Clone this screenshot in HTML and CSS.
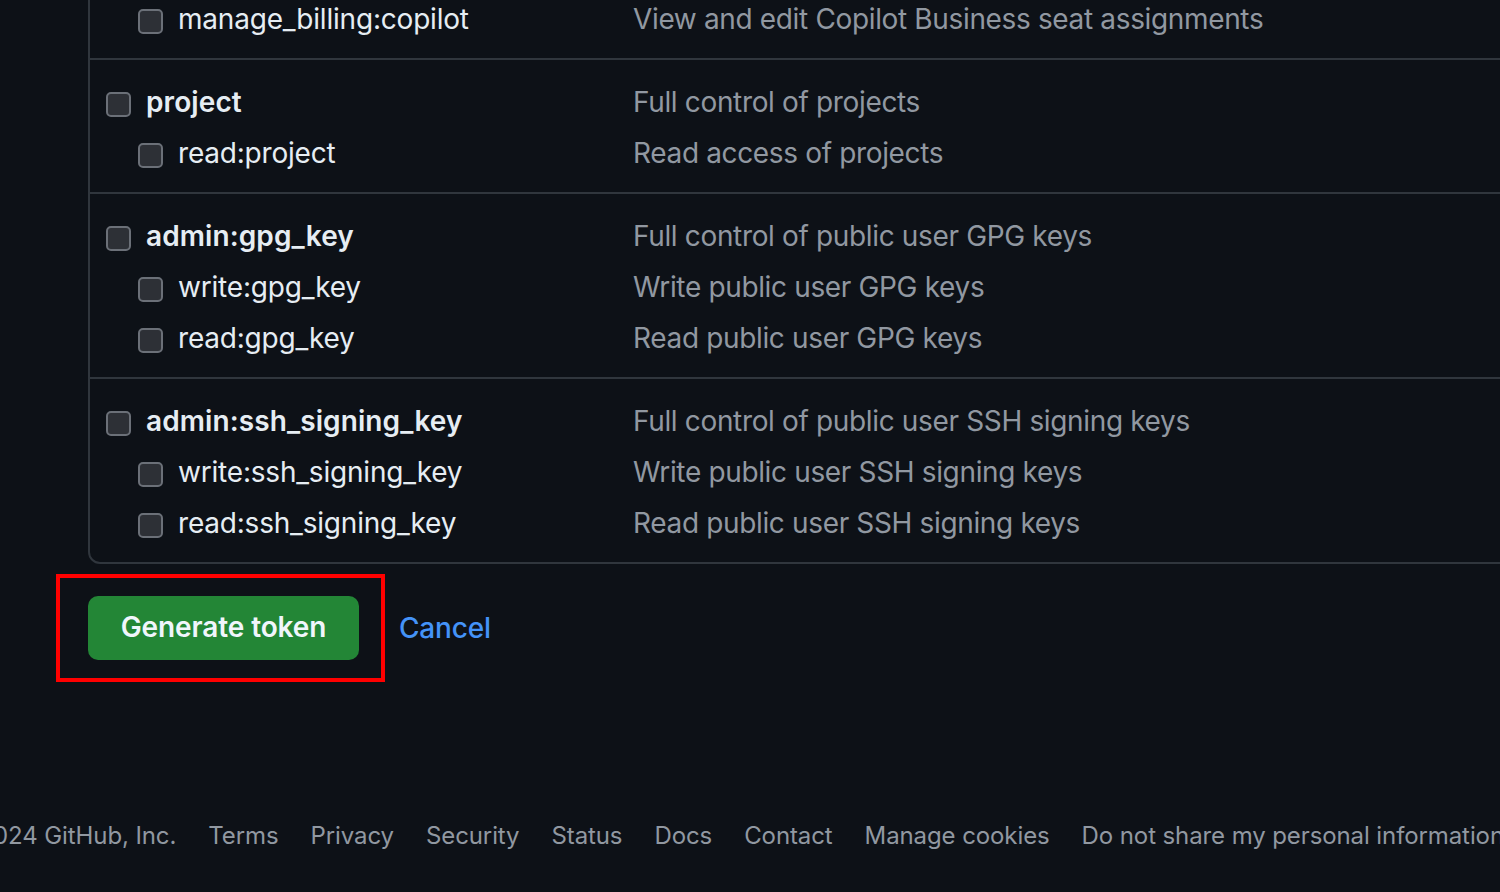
FILE: index.html
```html
<!DOCTYPE html>
<html lang="en">
<head>
<meta charset="utf-8">
<title>New personal access token</title>
<link rel="stylesheet" href="styles.css">
</head>
<body>
<main class="page">
  <div class="scopes">
    <div class="group">
      <div class="row">
        <label class="label parent"><span class="cb"></span><span class="name">copilot</span></label>
        <span class="desc">Full control of GitHub Copilot settings and seat assignments</span>
      </div>
      <div class="row sub">
        <label class="label"><span class="cb"></span><span class="name">manage_billing:copilot</span></label>
        <span class="desc">View and edit Copilot Business seat assignments</span>
      </div>
    </div>
    <div class="group">
      <div class="row">
        <label class="label parent"><span class="cb"></span><span class="name">project</span></label>
        <span class="desc">Full control of projects</span>
      </div>
      <div class="row sub">
        <label class="label"><span class="cb"></span><span class="name">read:project</span></label>
        <span class="desc">Read access of projects</span>
      </div>
    </div>
    <div class="group">
      <div class="row">
        <label class="label parent"><span class="cb"></span><span class="name">admin:gpg_key</span></label>
        <span class="desc">Full control of public user GPG keys</span>
      </div>
      <div class="row sub">
        <label class="label"><span class="cb"></span><span class="name">write:gpg_key</span></label>
        <span class="desc">Write public user GPG keys</span>
      </div>
      <div class="row sub">
        <label class="label"><span class="cb"></span><span class="name">read:gpg_key</span></label>
        <span class="desc">Read public user GPG keys</span>
      </div>
    </div>
    <div class="group">
      <div class="row">
        <label class="label parent"><span class="cb"></span><span class="name">admin:ssh_signing_key</span></label>
        <span class="desc">Full control of public user SSH signing keys</span>
      </div>
      <div class="row sub">
        <label class="label"><span class="cb"></span><span class="name">write:ssh_signing_key</span></label>
        <span class="desc">Write public user SSH signing keys</span>
      </div>
      <div class="row sub">
        <label class="label"><span class="cb"></span><span class="name">read:ssh_signing_key</span></label>
        <span class="desc">Read public user SSH signing keys</span>
      </div>
    </div>
  </div>
  <div class="actions">
    <button class="btn-primary" type="button">Generate token</button>
    <a class="cancel" href="#">Cancel</a>
    <div class="highlight"></div>
  </div>
</main>
<footer class="footer">
  <span>© 2024 GitHub, Inc.</span>
  <a href="#">Terms</a>
  <a href="#">Privacy</a>
  <a href="#">Security</a>
  <a href="#">Status</a>
  <a href="#">Docs</a>
  <a href="#">Contact</a>
  <a href="#">Manage cookies</a>
  <a href="#">Do not share my personal information</a>
</footer>
</body>
</html>
```
FILE: styles.css
```css
html, body {
  margin: 0;
  padding: 0;
  background: #0d1117;
  overflow: hidden;
  height: 892px;
}
body {
  font-family: Inter, "Noto Sans", "Liberation Sans", sans-serif;
  color: #e6edf3;
}
.page {
  margin-top: -76px;
  padding-left: 88px;
}
.scopes {
  width: 1500px;
  border: 2px solid #30363d;
  border-radius: 12px;
}
.group {
  padding: 19px 0 11px 16px;
}
.group + .group {
  border-top: 2px solid #30363d;
}
.row {
  display: grid;
  grid-template-columns: 527px 1fr;
  align-items: center;
  height: 51px;
  font-size: 28px;
}
.label {
  display: flex;
  align-items: center;
  gap: 15px;
  white-space: nowrap;
}
.label.parent {
  font-weight: 600;
}
.row.sub .label {
  padding-left: 32px;
}
.name {
  padding-bottom: 6px;
  letter-spacing: -0.2px;
}
.label.parent .name {
  letter-spacing: 0.1px;
}
.cb {
  box-sizing: border-box;
  width: 25px;
  height: 25px;
  flex: none;
  border: 2px solid #6b7078;
  border-radius: 5px;
  background: #2d3036;
}
.desc {
  padding-bottom: 6px;
  color: #9198a1;
  letter-spacing: -0.35px;
  white-space: nowrap;
}
.actions {
  position: relative;
  display: flex;
  align-items: center;
  margin-top: 32px;
}
.btn-primary {
  box-sizing: border-box;
  width: 271px;
  height: 64px;
  padding: 0 0 2px;
  border: none;
  border-radius: 10px;
  background: #238636;
  color: #f0f6fc;
  font-family: inherit;
  font-size: 28px;
  font-weight: 600;
  letter-spacing: -0.1px;
}
.cancel {
  margin-left: 40px;
  color: #4493f8;
  font-size: 28px;
  font-weight: 500;
  letter-spacing: -0.2px;
  text-decoration: none;
}
.highlight {
  position: absolute;
  left: -32px;
  top: -22px;
  width: 329px;
  height: 108px;
  box-sizing: border-box;
  border: 4px solid #ff0000;
}
.footer {
  display: flex;
  gap: 32px;
  margin-top: 158px;
  margin-left: -50px;
  font-size: 24px;
  line-height: 36px;
  letter-spacing: -0.1px;
  color: #9198a1;
  white-space: nowrap;
}
.footer a {
  color: #9198a1;
  text-decoration: none;
}
```
